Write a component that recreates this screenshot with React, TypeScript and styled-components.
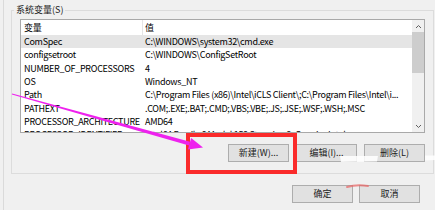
import React from 'react';
import styled, { createGlobalStyle } from 'styled-components';

type EnvVar = {
    name: string,
    value: string
}

const GlobalStyle = createGlobalStyle`
    html, body {
        margin: 0;
        padding: 0;
        background: #f0f0f0;
        width: 435px;
        height: 210px;
        overflow: hidden;
    }
    * {
        box-sizing: border-box;
    }
`;

const Window = styled.div`
    position: relative;
    width: 435px;
    height: 210px;
    padding-left: 3px;
    font-family: "Noto Sans CJK SC", "Liberation Sans", sans-serif;
    font-size: 9px;
    color: #000;
`;

const Content = styled.div`
    height: 100%;
    border-left: 1px solid #dadada;
    display: flex;
    flex-direction: column;
`;

const GroupBox = styled.fieldset`
    margin: 3px 1px 0 7px;
    padding: 2px 8px 11px 8px;
    border: 1px solid #dcdcdc;
    min-width: 0;
`;

const Legend = styled.legend`
    margin-left: -6px;
    padding: 0 2px;
    line-height: 14px;
    color: #1a1a1a;
`;

const ListBox = styled.div`
    display: flex;
    height: 114px;
    border: 1px solid #a9a9a9;
    background: #fff;
    overflow: hidden;
`;

const Table = styled.div`
    flex: 1;
    min-width: 0;
    overflow: hidden;
    letter-spacing: -0.3px;
`;

const Row = styled.div<{ $header?: boolean, $selected?: boolean }>`
    display: grid;
    grid-template-columns: 122px 1fr;
    height: ${p => p.$header ? '15px' : '13.33px'};
    line-height: ${p => p.$header ? '15px' : '13.33px'};
    background: ${p => p.$selected ? '#e5e5e5' : '#fff'};
    white-space: nowrap;
`;

const Cell = styled.div<{ $first?: boolean, $header?: boolean }>`
    padding-left: ${p => p.$first ? '3px' : '2px'};
    overflow: hidden;
    border-right: ${p => p.$header && p.$first ? '1px solid #e5e5e5' : 'none'};
`;

const ScrollBar = styled.div`
    width: 12px;
    display: flex;
    flex-direction: column;
    background: #f0f0f0;
`;

const ArrowButton = styled.div`
    height: 12px;
    display: flex;
    align-items: center;
    justify-content: center;
`;

const Track = styled.div`
    flex: 1;
`;

const Thumb = styled.div`
    height: 41px;
    background: #cdcdcd;
`;

const ButtonRow = styled.div<{ $gap: number }>`
    display: flex;
    justify-content: flex-end;
    gap: ${p => p.$gap}px;
`;

const ListActions = styled(ButtonRow)`
    margin-top: 11px;
`;

const DialogActions = styled(ButtonRow)`
    margin-top: 11px;
    padding-right: 15px;
`;

const Button = styled.button`
    width: 61px;
    height: 18px;
    padding: 0;
    background: #e1e1e1;
    border: 1px solid #adadad;
    border-radius: 0;
    font-family: inherit;
    font-size: 9px;
    line-height: 16px;
    color: #1a1a1a;
`;

const Overlay = styled.svg`
    position: absolute;
    top: 0;
    left: 0;
    pointer-events: none;
`;

const vars: EnvVar[] = [
    { name: 'ComSpec', value: 'C:\\WINDOWS\\system32\\cmd.exe' },
    { name: 'configsetroot', value: 'C:\\WINDOWS\\ConfigSetRoot' },
    { name: 'NUMBER_OF_PROCESSORS', value: '4' },
    { name: 'OS', value: 'Windows_NT' },
    { name: 'Path', value: 'C:\\Program Files (x86)\\Intel\\iCLS Client\\;C:\\Program Files\\Intel\\i...' },
    { name: 'PATHEXT', value: '.COM;.EXE;.BAT;.CMD;.VBS;.VBE;.JS;.JSE;.WSF;.WSH;.MSC' },
    { name: 'PROCESSOR_ARCHITECTURE', value: 'AMD64' },
    { name: 'PROCESSOR_IDENTIFIER', value: 'Intel64 Family 6 Model 158 Stepping 9, GenuineIntel' },
];

const Chevron = ({ up }: { up?: boolean }) => (
    <svg width="7" height="5" viewBox="0 0 7 5">
        <polyline
            points={up ? '1,4 3.5,1.5 6,4' : '1,1 3.5,3.5 6,1'}
            fill="none"
            stroke="#606060"
            strokeWidth="1"
        />
    </svg>
);

const App = () => {
    return <Window>
        <GlobalStyle />
        <Content>
            <GroupBox>
                <Legend>系统变量(S)</Legend>
                <ListBox>
                    <Table>
                        <Row $header>
                            <Cell $first $header>变量</Cell>
                            <Cell $header>值</Cell>
                        </Row>
                        {vars.map((v, i) => (
                            <Row key={v.name} $selected={i === 0}>
                                <Cell $first>{v.name}</Cell>
                                <Cell>{v.value}</Cell>
                            </Row>
                        ))}
                    </Table>
                    <ScrollBar>
                        <ArrowButton><Chevron up /></ArrowButton>
                        <Track><Thumb /></Track>
                        <ArrowButton><Chevron /></ArrowButton>
                    </ScrollBar>
                </ListBox>
                <ListActions $gap={7}>
                    <Button>新建(W)...</Button>
                    <Button>编辑(I)...</Button>
                    <Button>删除(L)</Button>
                </ListActions>
            </GroupBox>
            <DialogActions $gap={6}>
                <Button>确定</Button>
                <Button>取消</Button>
            </DialogActions>
        </Content>

        <Overlay width="435" height="210" viewBox="0 0 435 210">
            <polygon points="340,156 378,156 377,161.5 341,162" fill="#fff" opacity="0.85" />
            <polygon points="425,155.5 435,155.5 435,160 425,160.5" fill="#fff" opacity="0.85" />
            <path d="M347 187 Q357 184 368 186" stroke="#e86a6a" strokeWidth="2" fill="none" strokeLinecap="round" opacity="0.75" />
            <rect x="188" y="135" width="107" height="37" fill="none" stroke="#fa2b2b" strokeWidth="4" />
            <polygon points="12.1,93.5 190,141.8 189,145.6 11.9,94.5" fill="#ee22ee" />
            <polygon points="203,147.5 191.1,137.9 187.9,149.5" fill="#ee22ee" />
        </Overlay>
    </Window>;
}

export default App;
